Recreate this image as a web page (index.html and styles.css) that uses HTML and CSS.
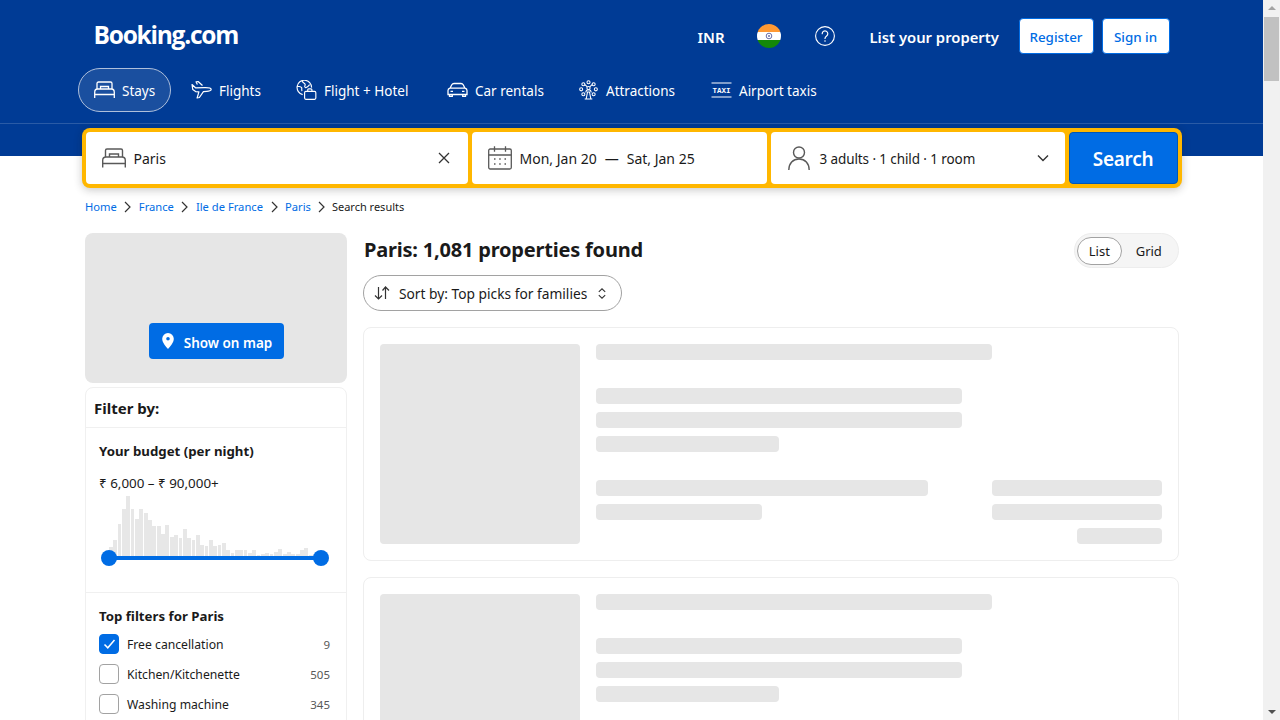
FILE: index.html
```html
<!DOCTYPE html>
<html lang="en">
<head>
<meta charset="utf-8">
<title>Booking.com: Paris search results</title>
<link rel="stylesheet" href="styles.css">
</head>
<body>
<div class="page">
  <div class="viewport">
    <header class="hero">
      <div class="wrap">
        <div class="top">
          <span class="logo">Booking.com</span>
          <div class="top-actions">
            <span class="inr">INR</span>
            <svg class="flag" viewBox="0 0 24 24"><defs><clipPath id="fc"><circle cx="12" cy="12" r="12"/></clipPath></defs><g clip-path="url(#fc)"><rect width="24" height="8" fill="#ff9933"/><rect y="8" width="24" height="8" fill="#fff"/><rect y="16" width="24" height="8" fill="#138808"/></g><circle cx="12" cy="12" r="2.8" fill="none" stroke="#6a6fa8" stroke-width="1"/><circle cx="12" cy="12" r="1" fill="#6a6fa8"/></svg>
            <svg class="help" viewBox="0 0 20 20" fill="none" stroke="#fff"><circle cx="10" cy="10" r="9.4" stroke-width="1.1"/><path d="M7.2 7.7a2.8 2.8 0 1 1 4.4 2.3c-1 .7-1.6 1.2-1.6 2.5" stroke-width="1.2" stroke-linecap="round"/><circle cx="10" cy="15" r=".8" fill="#fff" stroke="none"/></svg>
            <span class="list-prop">List your property</span>
            <div class="auth">
              <span class="auth-btn register">Register</span>
              <span class="auth-btn signin">Sign in</span>
            </div>
          </div>
        </div>
        <nav class="nav">
          <a class="nav-item n-stays active">
            <svg class="nav-ic" viewBox="0 0 21 18" fill="none" stroke="#fff" stroke-width="1.3"><path d="M3 8V2.500A1.500 1.500 0 0 1 4.500 1h12A1.500 1.500 0 0 1 18 2.500V8M.7 17v-5.500C.7 9.500 2 8 3.500 8h14c1.500 0 2.800 1.500 2.800 3.500V17M.7 13.500h19.600M6.500 8V5.500h8V8"/></svg>
            <span>Stays</span>
          </a>
          <a class="nav-item n-flights">
            <svg class="nav-ic" viewBox="0 0 21 18" fill="none" stroke="#fff" stroke-width="1.2" stroke-linejoin="round"><path d="M1 3.500l3.500 3.300 8.700-.2c2.300 0 6.800-.3 7 1.700.1 1.300-2.300 2-4.300 2.100l-3.500.2-4 5.900-2.300.500 1.800-6.200-3.300-.2-2.800-2L1 3.500zM6.400 3.500l-1.300-2.600 2-.4 4.400 4"/></svg>
            <span>Flights</span>
          </a>
          <a class="nav-item n-fh">
            <svg class="nav-ic" viewBox="0 0 21 21" fill="none" stroke="#fff" stroke-width="1.2"><path d="M6.500 15.300A7.600 7.600 0 1 1 15.800 8M1.300 6.500c2 .5 3.200.2 4 1.500s-.5 2.500.7 3.500M5.800 1.200C7 3.200 8.500 3 9 4.500S7.500 7 9.300 7.800c1.500.7 3-1 4.500-3"/><rect x="8.500" y="12" width="11.800" height="8.300" rx="1.300"/><path d="M11.800 12v-1.700a1 1 0 0 1 1-1h2.400a1 1 0 0 1 1 1V12"/></svg>
            <span>Flight + Hotel</span>
          </a>
          <a class="nav-item n-car">
            <svg class="nav-ic" viewBox="0 0 21 18" fill="none" stroke="#fff" stroke-width="1.3"><path d="M1 9.500C1 8 2 7.500 3 7.200l1.800-3.500C5.200 3 5.800 2.500 7 2.500h7c1.200 0 1.800.5 2.200 1.200L18 7.200c1 .3 2 .8 2 2.300v4H1v-4zM3 7.200h15M2.500 13.500v1.800h2.800v-1.800M15.700 13.500v1.800h2.800v-1.800M3.500 10.300h2.500M15 10.300h2.500"/></svg>
            <span>Car rentals</span>
          </a>
          <a class="nav-item n-attr">
            <svg class="nav-ic" viewBox="0 0 20 21" fill="none" stroke="#fff" stroke-width="1.1"><circle cx="10" cy="2.300" r="1.600"/><circle cx="4.600" cy="4.500" r="1.600"/><circle cx="15.400" cy="4.500" r="1.600"/><circle cx="2.300" cy="9.800" r="1.600"/><circle cx="17.700" cy="9.800" r="1.600"/><circle cx="4.600" cy="15" r="1.600"/><circle cx="15.400" cy="15" r="1.600"/><circle cx="10" cy="8.500" r="1.700"/><path d="M10 10.200c-2 0-2.800 1.300-2.800 3M10 10.200c2 0 2.800 1.300 2.800 3M7.500 20l1.500-7.500h2L12.500 20zM6 20h8M6.200 4.800l2.500 2.500M13.800 4.800l-2.500 2.500"/></svg>
            <span>Attractions</span>
          </a>
          <a class="nav-item n-taxi">
            <svg class="nav-ic" viewBox="0 0 21 20" fill="none" stroke="#fff"><path d="M.5 3h20M.5 17h20" stroke-width="1.100"/><text x="10.500" y="13.300" text-anchor="middle" class="taxi-text">TAXI</text></svg>
            <span>Airport taxis</span>
          </a>
        </nav>
      </div>
      <div class="rule"></div>
      <div class="wrap">
        <form class="search">
          <div class="field f-dest">
            <svg class="ic-bed" viewBox="0 0 24 20" fill="none" stroke="#595959" stroke-width="1.400"><path d="M3.500 9V2.500A1.500 1.500 0 0 1 5 1h14a1.500 1.500 0 0 1 1.500 1.500V9M.7 19.500V12.500C.7 10.500 2 9 4 9h16c2 0 3.300 1.500 3.300 3.500v7M.7 15.500h22.600M7.500 9V6h9v3"/></svg>
            <span class="f-text">Paris</span>
            <svg class="ic-x" viewBox="0 0 12 12" fill="none" stroke="#333" stroke-width="1.300"><path d="M1 1l10 10M11 1L1 11"/></svg>
          </div>
          <div class="field f-date">
            <svg class="ic-cal" viewBox="0 0 24 24" fill="none" stroke="#595959" stroke-width="1.300"><rect x=".7" y="3" width="22.600" height="20" rx="1.500"/><path d="M.7 9h22.600M6.500 .3v5.500M17.500 .3v5.500"/><path d="M6 13h1.500M11.200 13h1.500M16.500 13h1.500M6 18h1.500M11.200 18h1.500M16.500 18h1.500" stroke-width="1.600"/></svg>
            <span class="f-text">Mon, Jan 20</span>
            <span class="f-dash">—</span>
            <span class="f-text">Sat, Jan 25</span>
          </div>
          <div class="field f-guests">
            <svg class="ic-person" viewBox="0 0 22 24" fill="none" stroke="#595959" stroke-width="1.400"><circle cx="11" cy="6.500" r="5.500"/><path d="M.8 24c0-6.500 4.200-11 10.200-11s10.200 4.500 10.200 11"/></svg>
            <span class="f-text">3 adults · 1 child · 1 room</span>
            <svg class="ic-chev" viewBox="0 0 12 8" fill="none" stroke="#333" stroke-width="1.400"><path d="M1 1.500l5 5 5-5"/></svg>
          </div>
          <button class="search-btn" type="button">Search</button>
        </form>
      </div>
    </header>

    <div class="wrap content">
      <div class="crumbs">
        <a>Home</a><svg class="crumb-sep" viewBox="0 0 7 12" fill="none" stroke="#333" stroke-width="1.200"><path d="M1 1l5 5-5 5"/></svg>
        <a>France</a><svg class="crumb-sep" viewBox="0 0 7 12" fill="none" stroke="#333" stroke-width="1.200"><path d="M1 1l5 5-5 5"/></svg>
        <a>Ile de France</a><svg class="crumb-sep" viewBox="0 0 7 12" fill="none" stroke="#333" stroke-width="1.200"><path d="M1 1l5 5-5 5"/></svg>
        <a>Paris</a><svg class="crumb-sep" viewBox="0 0 7 12" fill="none" stroke="#333" stroke-width="1.200"><path d="M1 1l5 5-5 5"/></svg>
        <span class="crumb-last">Search results</span>
      </div>

      <div class="columns">
        <aside class="side">
          <div class="map">
            <span class="map-btn">
              <svg class="ic-pin" viewBox="0 0 12 16"><path fill="#fff" fill-rule="evenodd" d="M6 0a5.800 5.800 0 0 0-5.800 5.800C.2 9.500 4 14 6 16c2-2 5.800-6.500 5.800-10.200A5.800 5.800 0 0 0 6 0zm0 4a1.800 1.800 0 1 1 0 3.600A1.800 1.800 0 0 1 6 4z"/></svg>
              Show on map
            </span>
          </div>
          <div class="filters">
            <div class="filter-head">Filter by:</div>
            <section class="budget">
              <h3 class="f-title">Your budget (per night)</h3>
              <div class="range">₹ 6,000 – ₹ 90,000+</div>
              <div class="hist">
                <i style="height:10px"></i><i style="height:17px"></i><i style="height:33px"></i><i style="height:48px"></i><i style="height:61px"></i><i style="height:48px"></i><i style="height:38px"></i><i style="height:48px"></i><i style="height:44px"></i><i style="height:37px"></i><i style="height:31px"></i><i style="height:31px"></i><i style="height:23px"></i><i style="height:32px"></i><i style="height:20px"></i><i style="height:22px"></i><i style="height:19px"></i><i style="height:28px"></i><i style="height:19px"></i><i style="height:17px"></i><i style="height:22px"></i><i style="height:12px"></i><i style="height:11px"></i><i style="height:17px"></i><i style="height:11px"></i><i style="height:12px"></i><i style="height:14px"></i><i style="height:7px"></i><i style="height:4px"></i><i style="height:7px"></i><i style="height:7px"></i><i style="height:7px"></i><i style="height:4px"></i><i style="height:7px"></i><i style="height:2px"></i><i style="height:3px"></i><i style="height:4px"></i><i style="height:3px"></i><i style="height:5px"></i><i style="height:8px"></i><i style="height:3px"></i><i style="height:5px"></i><i style="height:3px"></i><i style="height:3px"></i><i style="height:7px"></i><i style="height:9px"></i><i style="height:2px"></i><i style="height:3px"></i><i style="height:2px"></i>
              </div>
              <div class="slider"><b class="knob k-l"></b><b class="knob k-r"></b></div>
            </section>
            <section class="top-filters">
              <h3 class="f-title">Top filters for Paris</h3>
              <div class="check-row"><span class="box on"><svg viewBox="0 0 12 10" fill="none" stroke="#fff" stroke-width="1.500"><path d="M1 5.500l3.300 3.300L11 1"/></svg></span><span class="c-label">Free cancellation</span><span class="c-count">9</span></div>
              <div class="check-row"><span class="box"></span><span class="c-label">Kitchen/Kitchenette</span><span class="c-count">505</span></div>
              <div class="check-row"><span class="box"></span><span class="c-label">Washing machine</span><span class="c-count">345</span></div>
            </section>
          </div>
        </aside>

        <main class="results">
          <div class="res-head">
            <div class="res-left">
              <h1 class="title">Paris: 1,081 properties found</h1>
              <span class="sort">
                <svg class="ic-sort" viewBox="0 0 16 14" fill="none" stroke="#333" stroke-width="1.200"><path d="M4.500 1v12M1 9.500L4.500 13 8 9.500M11.500 13V1M8.500 4.500L11.500 1 15 4.500"/></svg>
                <span class="sort-label">Sort by: Top picks for families</span>
                <svg class="ic-updown" viewBox="0 0 8 11" fill="none" stroke="#333" stroke-width="1.100"><path d="M.8 3.800L4 .8l3.200 3M.8 7.200L4 10.200l3.200-3"/></svg>
              </span>
            </div>
            <div class="toggle"><span class="tg on">List</span><span class="tg">Grid</span></div>
          </div>

          <article class="card">
            <div class="sk-img"></div>
            <div class="sk-body">
              <div class="sk l396"></div>
              <div class="sk-group">
                <div class="sk l366"></div><div class="sk l366"></div><div class="sk l183"></div>
              </div>
              <div class="sk-foot">
                <div class="sk-foot-l"><div class="sk l332"></div><div class="sk l166"></div></div>
                <div class="sk-foot-r"><div class="sk l170"></div><div class="sk l170"></div><div class="sk l85"></div></div>
              </div>
            </div>
          </article>

          <article class="card">
            <div class="sk-img"></div>
            <div class="sk-body">
              <div class="sk l396"></div>
              <div class="sk-group">
                <div class="sk l366"></div><div class="sk l366"></div><div class="sk l183"></div>
              </div>
              <div class="sk-foot">
                <div class="sk-foot-l"><div class="sk l332"></div><div class="sk l166"></div></div>
                <div class="sk-foot-r"><div class="sk l170"></div><div class="sk l170"></div><div class="sk l85"></div></div>
              </div>
            </div>
          </article>
        </main>
      </div>
    </div>
  </div>
  <div class="scrollbar">
    <span class="sb-arrow up"></span>
    <span class="sb-thumb"></span>
    <span class="sb-arrow down"></span>
  </div>
</div>
</body>
</html>
```

FILE: styles.css
```css
* { box-sizing: border-box; }
html, body { margin: 0; height: 720px; overflow: hidden; }
body { font-family: "Noto Sans", "Open Sans", sans-serif; color: #1a1a1a; font-size: 14px; background: #fff; }
h1, h3 { margin: 0; }
.page { display: flex; height: 720px; overflow: hidden; }
.viewport { width: 1263px; flex: none; height: 720px; overflow: hidden; }
.wrap { width: 1100px; margin: 0 auto; }

/* scrollbar */
.scrollbar { width: 17px; background: #f1f1f1; display: flex; flex-direction: column; align-items: center; position: relative; }
.sb-arrow { width: 0; height: 0; border-left: 4px solid transparent; border-right: 4px solid transparent; margin-top: 6px; border-bottom: 4px solid #a3a3a3; }
.sb-thumb { width: 15px; height: 64px; background: #c1c1c1; margin-top: 7px; }
.sb-arrow.down { margin-top: auto; margin-bottom: 6px; border-bottom: 0; border-top: 4px solid #505050; }

/* hero */
.hero { background: #003b95; height: 156px; }
.top { height: 68px; display: flex; justify-content: space-between; padding: 0 12px 0 12px; }
.logo { color: #fff; font-family: "Open Sans", sans-serif; font-weight: 700; font-size: 24.500px; letter-spacing: -1.250px; line-height: 24px; margin-top: 23px; height: 24px; }
.top-actions { display: flex; align-items: center; color: #fff; height: 36px; margin-top: 18px; }
.inr { font-weight: 600; font-size: 15px; width: 59px; padding-top: 2px; }
.flag { width: 24px; height: 24px; margin-right: 34px; }
.help { width: 20px; height: 20px; margin-right: 34px; }
.list-prop { font-size: 14.800px; font-weight: 600; white-space: nowrap; margin-left: 1px; flex: none; width: 149px; padding-top: 2px; }
.auth { display: flex; gap: 8px; }
.auth-btn { height: 36px; background: #fff; border: 1px solid #006ce4; border-radius: 4px; color: #006ce4; font-size: 13.400px; font-weight: 500; display: flex; align-items: center; justify-content: center; padding-top: 2px; }
.register { width: 75px; }
.signin { width: 68px; }

.nav { height: 44px; display: flex; gap: 4px; margin-left: -4px; }
.nav-item { display: flex; align-items: center; gap: 7.500px; padding: 0 15px; height: 44px; color: #fff; font-size: 13.500px; border-radius: 22px; border: 1px solid transparent; white-space: nowrap; flex: none; }
.nav-item span { padding-top: 2px; }
.n-stays { width: 93px; }
.n-flights { width: 101px; }
.n-fh { width: 147px; }
.n-car { width: 127px; }
.n-attr { width: 129px; }
.n-taxi { width: 136px; }
.nav-item.active { background: #1a4f9f; border-color: #aebfdb; }
.nav-ic { width: 21px; height: 20px; flex: none; }
.taxi-text { font: 700 7.500px "Liberation Mono", monospace; fill: #fff; stroke: none; }
.rule { height: 1px; background: #2a5ba6; margin-top: 11px; }

/* search */
.search { margin-top: 4px; height: 60px; background: #ffb700; border-radius: 8px; padding: 4px; display: flex; gap: 4px; box-shadow: 0 2px 8px rgba(26,26,26,.24); position: relative; }
.field { background: #fff; border-radius: 4px; display: flex; align-items: center; height: 52px; }
.f-dest { width: 382px; padding: 0 16px; gap: 8px; }
.f-date { width: 295px; padding: 0 16px; gap: 8px; }
.f-guests { width: 294px; padding: 0 16px 0 17px; gap: 10px; }
.f-text { font-size: 14px; white-space: nowrap; }
.f-guests .f-text { font-size: 13.500px; letter-spacing: -.1px; padding-top: 2px; }
.f-dash { width: 14px; margin: 0; text-align: center; }
.ic-bed { width: 24px; height: 20px; flex: none; }
.ic-x { width: 12px; height: 12px; margin-left: auto; margin-right: 2px; }
.ic-cal { width: 24px; height: 24px; flex: none; }
.ic-person { width: 22px; height: 24px; flex: none; }
.ic-chev { width: 12px; height: 8px; margin-left: auto; }
.search-btn { width: 109px; height: 52px; background: #006ce4; color: #fff; border: 1px solid #0057b8; border-radius: 4px; font: 600 19px "Noto Sans", sans-serif; letter-spacing: -.3px; padding: 2px 0 0; }

/* content */
.content { padding: 0 2.500px 0 3.500px; }
.crumbs { margin-top: 42px; height: 17px; display: flex; align-items: center; font-size: 11.200px; line-height: 17px; }
.crumbs a { color: #006ce4; }
.crumb-sep { width: 7px; height: 12px; margin: 0 7.500px; flex: none; }
.crumb-last { margin-left: -1px; font-size: 11px; }
.columns { display: flex; gap: 16px; margin-top: 18px; }
.side { width: 262px; flex: none; }
.map { height: 150px; background: #e6e6e6; border-radius: 8px; display: flex; justify-content: center; align-items: flex-end; padding-bottom: 24px; }
.map-btn { width: 135px; height: 36px; background: #006ce4; border-radius: 4px; color: #fff; font-weight: 600; font-size: 13.500px; display: flex; align-items: center; justify-content: center; gap: 10px; padding: 3px 0 0 2px; }
.ic-pin { width: 12px; height: 16px; position: relative; top: -2px; }
.filters { margin-top: 4px; border: 1px solid #f0f0f0; border-radius: 8px 8px 0 0; height: 400px; }
.filter-head { height: 40px; padding: 11px 8px 0; font-weight: 700; font-size: 15px; line-height: 18px; border-bottom: 1px solid #f0f0f0; }
.budget { padding: 14px 13px 0; height: 165px; border-bottom: 1px solid #f0f0f0; position: relative; }
.f-title { font-size: 13.250px; font-weight: 700; line-height: 18px; }
.range { margin-top: 14px; font-size: 13.400px; line-height: 18px; }
.hist { height: 64px; margin: 1px 12px 0 10px; display: flex; align-items: flex-end; gap: .6px; }
.hist i { flex: 1; background: #e7e7e7; display: block; }
.slider { height: 4px; background: #006ce4; margin: -1px 12px 0 10px; position: relative; }
.knob { position: absolute; width: 16px; height: 16px; border-radius: 50%; background: #006ce4; top: -6px; }
.k-l { left: -8px; }
.k-r { right: -8px; }
.top-filters { padding: 14px 16px 0 13px; }
.check-row { display: flex; align-items: center; height: 20px; margin-top: 10px; }
.top-filters .f-title + .check-row { margin-top: 9px; }
.box { width: 20px; height: 20px; border: 1px solid #a2a2a2; border-radius: 4px; flex: none; display: flex; align-items: center; justify-content: center; margin-right: 8px; }
.box.on { background: #006ce4; border-color: #006ce4; }
.box svg { width: 13px; height: 10px; }
.c-label { font-size: 12.200px; flex: 1; }
.c-count { font-size: 11.500px; color: #595959; }

.results { flex: 1; min-width: 0; }
.res-head { height: 94px; display: flex; justify-content: space-between; align-items: flex-start; }
.res-left { display: flex; flex-direction: column; align-items: flex-start; }
.title { font-size: 20px; font-weight: 700; letter-spacing: -.2px; line-height: 34px; margin-left: 1px; white-space: nowrap; }
.sort { margin-top: 8px; height: 36px; width: 259px; border: 1px solid #a2a2a2; border-radius: 18px; display: flex; align-items: center; padding: 0 15px 0 10px; font-size: 13.750px; white-space: nowrap; }
.sort-label { padding-top: 1px; margin-left: 1px; }
.ic-sort { width: 16px; height: 14px; margin-right: 8px; flex: none; }
.ic-updown { width: 8px; height: 11px; margin-left: auto; flex: none; }
.toggle { width: 105px; height: 35px; background: #f5f5f5; border: 1px solid #ededed; border-radius: 18px; display: flex; align-items: center; padding: 0 2px; font-size: 13px; }
.tg { height: 28px; display: flex; align-items: center; justify-content: center; width: 55px; padding-top: 1px; }
.tg.on { width: 45px; background: #fff; border: 1px solid #a2a2a2; border-radius: 14px; }

.card { display: flex; gap: 16px; padding: 16px; border: 1px solid #eee; border-radius: 8px; margin-bottom: 16px; height: 234px; }
.sk-img { width: 200px; height: 200px; background: #e6e6e6; border-radius: 4px; flex: none; }
.sk-body { flex: 1; display: flex; flex-direction: column; }
.sk { height: 16px; background: #e6e6e6; border-radius: 4px; }
.sk-group { margin-top: 28px; display: flex; flex-direction: column; gap: 8px; }
.sk-foot { margin-top: 28px; display: flex; justify-content: space-between; }
.sk-foot-l, .sk-foot-r { display: flex; flex-direction: column; gap: 8px; }
.sk-foot-r { align-items: flex-end; }
.l396 { width: 396px; }
.l366 { width: 366px; }
.l183 { width: 183px; }
.l332 { width: 332px; }
.l166 { width: 166px; }
.l170 { width: 170px; }
.l85 { width: 85px; }
```
